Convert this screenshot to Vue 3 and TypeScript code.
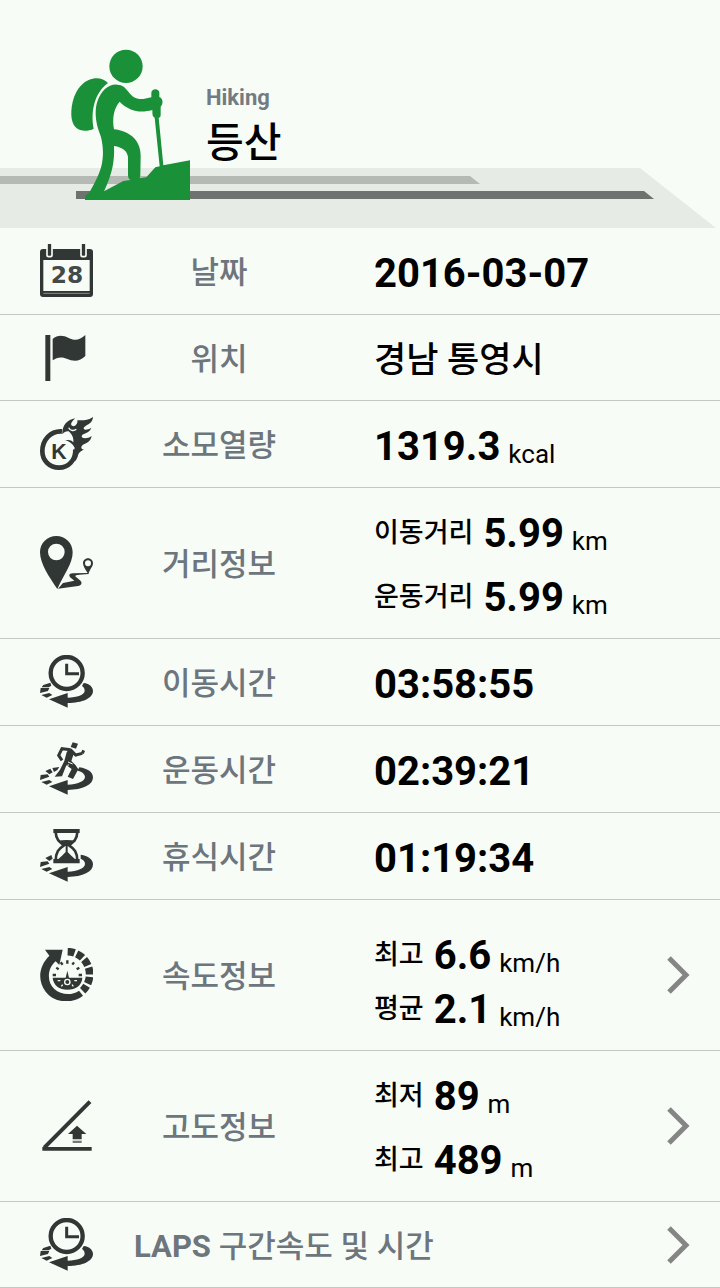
<script setup lang="ts">
interface Reading {
  caption?: string
  amount: string
  unit?: string
  korean?: boolean
}

interface Row {
  icon: string
  prefix?: string
  label: string
  readings: Reading[]
  size?: 'compact' | 'tall'
  dense?: boolean
  link?: boolean
}

const rows: Row[] = [
  { icon: 'calendar', label: '날짜', readings: [{ amount: '2016-03-07' }] },
  { icon: 'flag', label: '위치', size: 'compact', readings: [{ amount: '경남 통영시', korean: true }] },
  { icon: 'calorie', label: '소모열량', readings: [{ amount: '1319.3', unit: 'kcal' }] },
  {
    icon: 'distance',
    label: '거리정보',
    size: 'tall',
    readings: [
      { caption: '이동거리', amount: '5.99', unit: 'km' },
      { caption: '운동거리', amount: '5.99', unit: 'km' },
    ],
  },
  { icon: 'clock', label: '이동시간', readings: [{ amount: '03:58:55' }] },
  { icon: 'runner', label: '운동시간', readings: [{ amount: '02:39:21' }] },
  { icon: 'hourglass', label: '휴식시간', readings: [{ amount: '01:19:34' }] },
  {
    icon: 'gauge',
    label: '속도정보',
    size: 'tall',
    dense: true,
    link: true,
    readings: [
      { caption: '최고', amount: '6.6', unit: 'km/h' },
      { caption: '평균', amount: '2.1', unit: 'km/h' },
    ],
  },
  {
    icon: 'altitude',
    label: '고도정보',
    size: 'tall',
    link: true,
    readings: [
      { caption: '최저', amount: '89', unit: 'm' },
      { caption: '최고', amount: '489', unit: 'm' },
    ],
  },
  { icon: 'clock', prefix: 'LAPS', label: '구간속도 및 시간', size: 'compact', link: true, readings: [] },
]
</script>

<template>
  <main class="page">
    <header class="hero">
      <svg class="band" viewBox="0 0 720 60" preserveAspectRatio="none" aria-hidden="true">
        <path d="M0 0H640L716 60H0Z" fill="#e7ebe6" />
        <path d="M0 8H470L480 16H0Z" fill="#b5bab5" />
        <path d="M76 23H644L654 31H76Z" fill="#6f736f" />
      </svg>
      <svg class="hiker" viewBox="60 54 360 456" aria-hidden="true">
        <g fill="#1a9138">
          <circle cx="228" cy="109" r="50" />
          <path d="M174 159C160 144 138 141 116 150C84 164 66 202 64 244C62 278 74 302 104 302C114 302 124 300 131 296C122 246 132 190 174 159Z" />
          <path d="M202 164C218 164 226 174 234 184C248 203 260 209 280 207L304 202V188C304 174 328 174 328 188V201C340 206 340 222 332 230V254C332 260 330 262 326 263L340 406L420 391V510H105V498L119 486C136 456 150 430 156 400C162 370 158 340 152 318C142 294 134 264 138 232C142 204 158 176 180 167Q191 163 202 164ZM209 215C192 234 186 264 192 298C214 300 238 310 252 324C266 340 272 356 272 380L271 436C271 440 270 443 268 445L289 442L316 412L329 409L314 263C308 260 307 256 307 240C270 250 238 244 209 215ZM192 348C194 392 188 428 162 484L220 453L241 450C236 446 234 442 234 434V382C232 362 218 352 192 348Z" />
        </g>
      </svg>
      <div class="titles">
        <p class="subtitle">Hiking</p>
        <h1 class="title">등산</h1>
      </div>
    </header>

    <component
      :is="row.link ? 'button' : 'section'"
      v-for="row in rows"
      :key="row.label"
      :type="row.link ? 'button' : undefined"
      class="row"
      :class="[row.size, { dense: row.dense, wide: !row.readings.length }]"
    >
      <svg class="icon" viewBox="0 0 159 159" aria-hidden="true">
        <g v-if="row.icon === 'calendar'">
          <rect x="0" y="15" width="159" height="144" rx="9" fill="#303735" />
          <rect x="10" y="48" width="139" height="93" fill="#f8fcf7" />
          <path d="M10 148H149" stroke="#878d89" stroke-width="3" />
          <g fill="#303735" stroke="#f8fcf7" stroke-width="5">
            <rect x="21" y="-4" width="15" height="42" rx="5" />
            <rect x="123" y="-4" width="15" height="42" rx="5" />
          </g>
          <text x="81" y="117" class="digits">28</text>
        </g>
        <g v-else-if="row.icon === 'flag'">
          <path d="M16 12H31V150H16Z" />
          <path d="M38 24C52 12 68 12 86 21C106 31 120 26 136 12V75C120 92 100 92 80 83C62 76 50 80 38 88Z" />
        </g>
        <g v-else-if="row.icon === 'calorie'">
          <path d="M66 43C31 41 7 69 7 103C7 131 29 152 57 152C85 152 107 130 106 97" class="line" stroke-width="14" />
          <text x="57" y="127" class="letter">K</text>
          <path d="M67 52C66 24 82 8 106 4C94 14 89 24 98 27C107 30 114 18 112 10C130 10 146 10 159 0C158 19 143 21 133 30C126 38 139 42 154 32C148 50 128 48 125 57C124 65 142 67 155 57C151 77 137 78 128 84C121 90 124 98 132 97C123 104 116 104 113 119C106 135 100 140 99 119L104 92C96 78 86 72 75 70C86 67 95 69 100 76C102 62 94 50 86 43C79 42 72 45 67 52Z" />
          <path d="M86 32C91 43 103 42 109 37" class="gap" stroke-width="4" />
        </g>
        <g v-else-if="row.icon === 'distance'">
          <path fill-rule="evenodd" d="M49 0C76 0 98 21 98 49C98 83 72 114 52 159C28 124 0 83 0 49C0 21 22 0 49 0ZM49 23A25 25 0 1 0 49 73A25 25 0 1 0 49 23Z" />
          <path fill-rule="evenodd" d="M144 67C153 67 159 74 159 82C159 92 149 100 145 115C138 103 129 92 129 82C129 74 135 67 144 67ZM144 73A9 9 0 1 0 144 91A9 9 0 1 0 144 73Z" />
          <path d="M144 111L98 112C86 113 85 120 94 127L103 134L69 141L54 158L114 150C126 148 128 139 119 132L108 123C103 118 108 117 118 116L146 114Z" />
        </g>
        <g v-else-if="row.icon === 'clock'">
          <circle cx="80" cy="54" r="48" class="line" stroke-width="13" />
          <path d="M80 26V56H117" class="line" stroke-width="9" />
          <path d="M131 84C149 86 159 96 159 108C159 129 128 144 83 144V158L27 133L83 114V128C111 127 134 119 134 107C134 100 130 96 126 93Z" />
          <path d="M10 90L31 83L34 92L26 97H5ZM2 99H28L24 108L0 114ZM4 120L28 114L37 120L20 128Z" />
        </g>
        <g v-else-if="row.icon === 'runner'">
          <path d="M98 1L114 5L108 20L92 15Z" />
          <path d="M92 23L66 20L56 40L66 55" class="line" stroke-width="9" />
          <path d="M91 23L107 39L127 34M127 34L131 25" class="line" stroke-width="9" />
          <path d="M87 21L103 30L94 57L107 70L115 82L99 111L83 104L95 81L79 70L66 103L44 104L60 83L73 57L80 31Z" />
          <path d="M84 60L98 66M85 67L79 85" class="gap" stroke-width="3" />
          <path d="M118 76C144 80 159 91 159 106C159 129 129 143 83 144V158L27 133L83 114V128C112 127 135 118 135 105C135 94 123 88 112 86Z" />
          <path d="M37 78L58 75L52 84L42 90ZM16 87L31 80L38 91L28 97ZM2 99L23 97L28 104L0 114ZM4 120L28 114L37 120L20 128Z" />
        </g>
        <g v-else-if="row.icon === 'hourglass'">
          <path d="M40 0H119V12H40Z" />
          <path d="M47 9C48 31 57 38 72 49C56 59 47 70 47 96H112C112 70 103 59 87 49C102 38 111 31 112 9" class="line" stroke-width="8" />
          <path d="M52 36Q80 30 108 36L87 51H72Z" />
          <path d="M40 103V90H55L66 80L77 69V50H83V69L94 80L105 90H119V103Z" />
          <path d="M122 77C145 81 159 91 159 106C159 129 129 143 83 144V158L27 133L83 114V128C112 127 135 118 135 105C135 97 130 92 122 89Z" />
          <path d="M16 87L34 78L38 89L28 96ZM2 99L23 97L28 104L0 114ZM4 120L28 114L37 120L20 128Z" />
        </g>
        <g v-else-if="row.icon === 'gauge'">
          <path d="M15 5H68L58 51L47 40C20 62 21 104 43 123C63 142 97 143 117 128L129 143C93 171 42 163 17 131C-9 96 -3 54 28 23Z" />
          <path d="M83 11A68 68 0 0 1 128 128" class="line" stroke-width="23" stroke-dasharray="21 7" />
          <path d="M38 89H127C126 112 107 125 82 125C58 125 40 112 38 89Z" />
          <path d="M38 81H48M49 59L56 64M62 43L68 50M82 37V47M102 43L97 50M118 59L110 64M126 81H116" class="line" stroke-width="7" />
          <path d="M82 68L90 102H74Z" />
          <circle cx="82" cy="102" r="8" fill="#303735" stroke="#f8fcf7" stroke-width="4" />
          <path d="M53 98H61M103 98H111M64 115L68 110M96 110L100 115" class="gap" stroke-width="4" />
        </g>
        <g v-else>
          <path d="M150 8L13 146" class="line" stroke-width="12" />
          <path d="M7 144H155V155H7ZM111 80L139 105H125V121H98V105H84Z" />
          <path d="M98 125H125V132H98Z" fill="#737976" />
        </g>
      </svg>

      <span class="label"><b v-if="row.prefix">{{ row.prefix + ' ' }}</b>{{ row.label }}</span>

      <span v-if="row.readings.length" class="values">
        <span v-for="reading in row.readings" :key="reading.caption" class="reading">
          <span v-if="reading.caption" class="caption">{{ reading.caption }}</span>
          <strong class="amount" :class="{ korean: reading.korean }">{{ reading.amount }}</strong>
          <span v-if="reading.unit" class="unit">{{ reading.unit }}</span>
        </span>
      </span>

      <svg v-if="row.link" class="chevron" viewBox="0 0 24 38" aria-hidden="true">
        <path d="M3 2L20 19L3 36" fill="none" stroke="#858585" stroke-width="5" />
      </svg>
    </component>
  </main>
</template>

<style>
body {
  margin: 0;
  background: #f8fcf7;
}
</style>

<style scoped>
.page {
  color: #000;
  background: #f8fcf7;
  font-family: Roboto, "Noto Sans CJK KR", sans-serif;
}

.hero {
  position: relative;
  display: flex;
  align-items: flex-start;
  gap: 16px;
  box-sizing: border-box;
  height: 228px;
  padding: 48px 70px 0;
}

.band {
  position: absolute;
  left: 0;
  bottom: 0;
  width: 100%;
  height: 60px;
}

.hiker {
  position: relative;
  flex: none;
  width: 120px;
  height: 152px;
}

.titles {
  padding-top: 36px;
}

.subtitle {
  margin: 0;
  color: #737b82;
  font-size: 22px;
  font-weight: 700;
  line-height: 28px;
}

.title {
  margin: 0;
  font-size: 41px;
  font-weight: 500;
  line-height: 62px;
}

.row {
  display: grid;
  grid-template-columns: 94px 170px 1fr auto;
  align-items: center;
  box-sizing: border-box;
  width: 100%;
  min-height: 87px;
  margin: 0;
  padding: 0 30px 0 40px;
  border: 0;
  border-bottom: 1px solid #c3c8c3;
  color: inherit;
  background: none;
  font: inherit;
  text-align: left;
}

.compact {
  min-height: 86px;
}

.tall {
  min-height: 151px;
}

.icon {
  width: 53px;
  height: 53px;
  margin-bottom: 1px;
  fill: #303735;
}

.line {
  fill: none;
  stroke: #303735;
}

.gap {
  fill: none;
  stroke: #f8fcf7;
}

.digits {
  fill: #444a48;
  font: bold 70px "DejaVu Sans", sans-serif;
  text-anchor: middle;
}

.letter {
  font: bold 64px "Liberation Sans", sans-serif;
  text-anchor: middle;
}

.label {
  padding-top: 4px;
  color: #6d757d;
  font-size: 31px;
  font-weight: 500;
  line-height: 44px;
  text-align: center;
  white-space: pre;
}

.wide .label {
  grid-column: 2 / 4;
  text-align: left;
}

.values {
  display: flex;
  flex-direction: column;
  gap: 10px;
  padding: 6px 0 0 70px;
}

.dense .values {
  gap: 0;
  padding-top: 16px;
}

.reading {
  display: flex;
  align-items: flex-end;
  white-space: nowrap;
}

.caption {
  align-self: flex-start;
  margin-right: 10px;
  font-size: 27px;
  font-weight: 500;
  line-height: 52px;
}

.amount {
  font-size: 40px;
  font-weight: 700;
  line-height: 54px;
}

.korean {
  font-size: 35px;
  font-weight: 500;
}

.unit {
  margin-left: 8px;
  font-size: 26px;
  line-height: 40px;
}

.chevron {
  width: 24px;
  height: 38px;
}
</style>
